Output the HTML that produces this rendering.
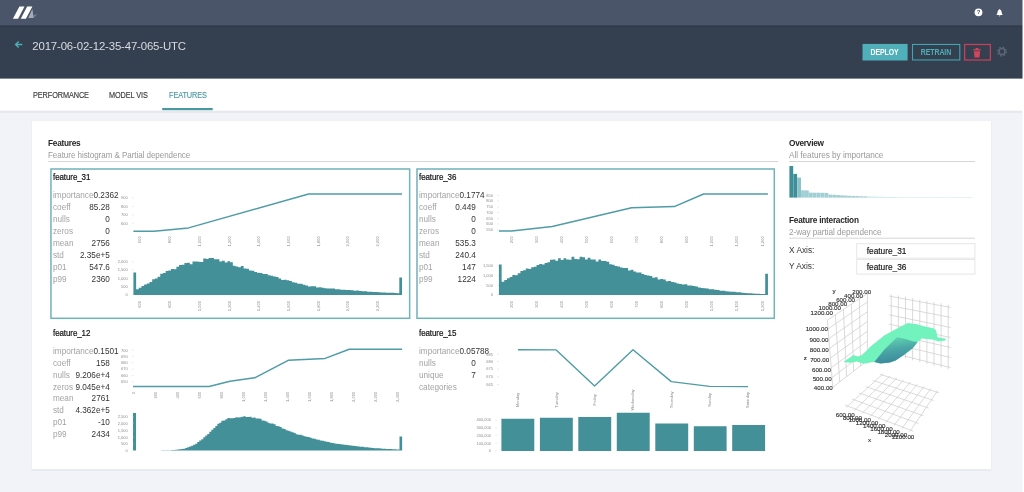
<!DOCTYPE html>
<html lang="en"><head><meta charset="utf-8"><title>Features</title>
<style>
*{box-sizing:border-box;margin:0;padding:0}
html,body{width:1024px;height:492px;overflow:hidden;background:#fff}
body{font-family:"Liberation Sans",sans-serif;position:relative;color:#222}
#app{position:absolute;left:0;top:0;width:1022.5px;height:492px;filter:blur(.6px)}
.abs{position:absolute}
#title{position:absolute;left:32.3px;top:39.1px;font-size:11.4px;line-height:14px;color:#d9dce1;letter-spacing:-.15px;white-space:nowrap}
.tab{position:absolute;top:90px;font-size:8.5px;line-height:11px;color:#3a3a3a;-webkit-text-stroke:.15px #3a3a3a;white-space:nowrap;transform-origin:0 50%;transform:scaleX(.86);letter-spacing:-.1px}
.tab.on{color:#4a98a2;-webkit-text-stroke:.15px #4a98a2}
.h1{position:absolute;font-size:8.6px;line-height:11px;color:#262626;font-weight:bold;white-space:nowrap;letter-spacing:-.25px;transform-origin:0 50%;transform:scaleX(.96)}
.h2{position:absolute;font-size:8.4px;line-height:11px;color:#9a9a9a;white-space:nowrap;letter-spacing:-.05px;transform-origin:0 50%;transform:scaleX(.958)}
.ft{position:absolute;font-size:8.6px;line-height:12px;color:#111;white-space:nowrap;letter-spacing:-.1px;-webkit-text-stroke:.2px #111;transform-origin:0 50%;transform:scaleX(.93)}
.st{position:absolute;display:flex;justify-content:space-between;font-size:9.1px;line-height:12px;white-space:nowrap;transform-origin:0 50%;transform:scaleX(.9)}
.st .k{color:#a3a3a3}
.st .v{color:#333}
.btn{position:absolute;top:44px;height:17px;font-size:8.7px;line-height:17.2px;text-align:center;font-weight:bold;letter-spacing:-.1px}
.btn span{display:inline-block;transform:scaleX(.8)}
.lab{position:absolute;font-size:8.3px;line-height:12px;color:#333;white-space:nowrap}
.inp{position:absolute;left:856.2px;width:118.8px;height:14.8px;font-size:8.3px;line-height:16px;padding-left:10.6px;color:#111;-webkit-text-stroke:.15px #111}
svg text{font-family:"Liberation Sans",sans-serif}
</style></head><body>
<div id="app">
<svg class="abs" style="left:-8px;top:-8px" width="1040" height="508" viewBox="-8 -8 1040 508">
<rect x="-8" y="-8" width="1040" height="508" fill="#f1f3f8"/>
<rect x="-8" y="100" width="1040" height="12.9" fill="#e7e8ec"/>
<rect x="-8" y="70" width="1040" height="40.7" fill="#fff"/>
<rect x="-8" y="20" width="1040" height="58.6" fill="#343f4f"/>
<rect x="-8" y="24" width="1040" height="2.8" fill="#2f394a"/>
<rect x="-8" y="-8" width="1040" height="33.4" fill="#4b556a"/>
<rect x="1022.5" y="-8" width="20" height="508" fill="#fff"/>
<rect x="162.2" y="108" width="50.5" height="2.2" fill="#4a98a2"/>
<rect x="31.5" y="120.7" width="959.9" height="350.1" rx="1" fill="#e7e9ed"/>
<rect x="31.9" y="121" width="959.1" height="348.1" fill="#fff"/>
<rect x="48.3" y="161" width="729.7" height="1" fill="#d6d6d6"/>
<rect x="789" y="161" width="186" height="1" fill="#d6d6d6"/>
<rect x="789" y="237.7" width="186" height="1" fill="#d6d6d6"/>
<rect x="856.7" y="243.7" width="118.2" height="14.5" fill="#fff" stroke="#e6e6e6" stroke-width="1"/>
<rect x="856.7" y="259.4" width="118.2" height="14.7" fill="#fff" stroke="#e6e6e6" stroke-width="1"/>
</svg>
<div id="title">2017-06-02-12-35-47-065-UTC</div>
<svg class="abs" style="left:0;top:0" width="1024" height="100" viewBox="0 0 1024 100">
<rect x="862.5" y="43.9" width="45.1" height="16.6" fill="#4fb0b9"/>
<rect x="912.5" y="44.45" width="47.3" height="15.5" fill="none" stroke="#41a4ae" stroke-width="1.1"/>
<rect x="964.6" y="44.5" width="25.8" height="15.5" fill="none" stroke="#c4405a" stroke-width="1.3"/>
</svg>
<div class="btn" style="left:862.5px;width:45.1px;color:#fff"><span>DEPLOY</span></div>
<div class="btn" style="left:912px;width:48.3px;color:#4fb0b9"><span>RETRAIN</span></div>
<div class="tab" style="left:33.3px">PERFORMANCE</div>
<div class="tab" style="left:108.7px">MODEL VIS</div>
<div class="tab on" style="left:168.7px">FEATURES</div>
<div class="h1" style="left:48.3px;top:137.8px">Features</div>
<div class="h2" style="left:48.3px;top:150px">Feature histogram &amp; Partial dependence</div>
<div class="h1" style="left:789px;top:138.3px">Overview</div>
<div class="h2" style="left:789px;top:149.9px;transform:scaleX(.988)">All features by importance</div>
<div class="h1" style="left:789px;top:215.2px">Feature interaction</div>
<div class="h2" style="left:789px;top:226.8px;transform:scaleX(.977)">2-way partial dependence</div>
<div class="lab" style="left:789px;top:244.1px">X Axis:</div>
<div class="lab" style="left:789px;top:259.9px">Y Axis:</div>
<div class="inp" style="top:243.4px">feature_31</div>
<div class="inp" style="top:258.8px">feature_36</div>
<div class="ft" style="left:53.3px;top:171px">feature_31</div>
<div class="st" style="left:53.3px;top:188.9px;width:63.1px"><span class="k">importance</span><span class="v">0.2362</span></div><div class="st" style="left:53.3px;top:200.8px;width:63.1px"><span class="k">coeff</span><span class="v">85.28</span></div><div class="st" style="left:53.3px;top:212.8px;width:63.1px"><span class="k">nulls</span><span class="v">0</span></div><div class="st" style="left:53.3px;top:224.8px;width:63.1px"><span class="k">zeros</span><span class="v">0</span></div><div class="st" style="left:53.3px;top:236.7px;width:63.1px"><span class="k">mean</span><span class="v">2756</span></div><div class="st" style="left:53.3px;top:248.7px;width:63.1px"><span class="k">std</span><span class="v">2.35e+5</span></div><div class="st" style="left:53.3px;top:260.6px;width:63.1px"><span class="k">p01</span><span class="v">547.6</span></div><div class="st" style="left:53.3px;top:272.6px;width:63.1px"><span class="k">p99</span><span class="v">2360</span></div>
<div class="ft" style="left:419px;top:171px">feature_36</div>
<div class="st" style="left:419.0px;top:188.9px;width:63.1px"><span class="k">importance</span><span class="v">0.1774</span></div><div class="st" style="left:419.0px;top:200.8px;width:63.1px"><span class="k">coeff</span><span class="v">0.449</span></div><div class="st" style="left:419.0px;top:212.8px;width:63.1px"><span class="k">nulls</span><span class="v">0</span></div><div class="st" style="left:419.0px;top:224.8px;width:63.1px"><span class="k">zeros</span><span class="v">0</span></div><div class="st" style="left:419.0px;top:236.7px;width:63.1px"><span class="k">mean</span><span class="v">535.3</span></div><div class="st" style="left:419.0px;top:248.7px;width:63.1px"><span class="k">std</span><span class="v">240.4</span></div><div class="st" style="left:419.0px;top:260.6px;width:63.1px"><span class="k">p01</span><span class="v">147</span></div><div class="st" style="left:419.0px;top:272.6px;width:63.1px"><span class="k">p99</span><span class="v">1224</span></div>
<div class="ft" style="left:53.1px;top:326.8px">feature_12</div>
<div class="st" style="left:53.3px;top:344.6px;width:63.1px"><span class="k">importance</span><span class="v">0.1501</span></div><div class="st" style="left:53.3px;top:356.6px;width:63.1px"><span class="k">coeff</span><span class="v">158</span></div><div class="st" style="left:53.3px;top:368.5px;width:63.1px"><span class="k">nulls</span><span class="v">9.206e+4</span></div><div class="st" style="left:53.3px;top:380.5px;width:63.1px"><span class="k">zeros</span><span class="v">9.045e+4</span></div><div class="st" style="left:53.3px;top:392.4px;width:63.1px"><span class="k">mean</span><span class="v">2761</span></div><div class="st" style="left:53.3px;top:404.4px;width:63.1px"><span class="k">std</span><span class="v">4.362e+5</span></div><div class="st" style="left:53.3px;top:416.3px;width:63.1px"><span class="k">p01</span><span class="v">-10</span></div><div class="st" style="left:53.3px;top:428.2px;width:63.1px"><span class="k">p99</span><span class="v">2434</span></div>
<div class="ft" style="left:418.6px;top:326.8px">feature_15</div>
<div class="st" style="left:419.0px;top:344.6px;width:63.1px"><span class="k">importance</span><span class="v">0.05788</span></div><div class="st" style="left:419.0px;top:356.6px;width:63.1px"><span class="k">nulls</span><span class="v">0</span></div><div class="st" style="left:419.0px;top:368.5px;width:63.1px"><span class="k">unique</span><span class="v">7</span></div><div class="st" style="left:419.0px;top:380.5px;width:63.1px"><span class="k">categories</span><span class="v"></span></div>
<svg class="abs" style="left:0;top:0" width="1024" height="492" viewBox="0 0 1024 492">
<!-- logo -->
<path d="M12.9 18.8L19.4 6.5L24.5 6.5L18.1 18.8Z M20.7 18.8L27.2 6.5L32.4 6.5L25.9 18.8Z" fill="#fff"/>
<path d="M28.3 17.9L32.4 9L33.6 17.9Z" fill="#a5adba"/>
<path d="M33.6 17.9L33.2 15.6L37.1 14.1Z" fill="#7d8797"/>
<!-- back arrow -->
<path d="M22.3 44.5H15.6M18.7 41.5L15.6 44.5L18.7 47.5" fill="none" stroke="#4fb0b9" stroke-width="1.35"/>
<!-- help -->
<circle cx="978.5" cy="12.3" r="3.9" fill="#fff"/>
<text x="978.6" y="14.4" font-size="6" font-weight="bold" text-anchor="middle" fill="#4b556a">?</text>
<!-- bell -->
<path d="M996.4 15 C997.6 14 997.3 11.2 998.3 10.2 C998.9 9.5 999.3 9.3 999.6 9 C999.9 9.3 1000.3 9.5 1000.9 10.2 C1001.9 11.2 1001.6 14 1002.8 15Z M998.8 15.6 H1000.4 A0.8 0.8 0 0 1 998.8 15.6Z" fill="#fff"/>
<!-- trash -->
<path d="M973.2 49.3H980.8V50.6H973.2Z M975.6 48.1H978.4V49.3H975.6Z M973.9 51.2H980.1L979.5 57.6H974.5Z" fill="#d4455c"/>
<!-- gear -->
<circle cx="1002" cy="51.6" r="4.3" fill="none" stroke="#5b6678" stroke-width="1.5" stroke-dasharray="1.7 1.68"/>
<circle cx="1002" cy="51.6" r="3" fill="none" stroke="#5b6678" stroke-width="1.5"/>
<rect x="50.95" y="169" width="358.7" height="149.3" fill="none" stroke="#6fb3bb" stroke-width="1.5"/>
<polyline points="133.4,231.2 154.0,231.2 188.6,227.9 308.6,194.0 402.0,194.0" fill="none" stroke="#4f9ca6" stroke-width="1.5" stroke-linejoin="round"/>
<text x="127.7" y="199.1" text-anchor="end" font-size="4.0" fill="#8c8c8c">900</text><line x1="131.7" x2="133.7" y1="197.7" y2="197.7" stroke="#d8d8d8" stroke-width="0.5"/><text x="127.7" y="207.9" text-anchor="end" font-size="4.0" fill="#8c8c8c">800</text><line x1="131.7" x2="133.7" y1="206.5" y2="206.5" stroke="#d8d8d8" stroke-width="0.5"/><text x="127.7" y="216.4" text-anchor="end" font-size="4.0" fill="#8c8c8c">700</text><line x1="131.7" x2="133.7" y1="215.0" y2="215.0" stroke="#d8d8d8" stroke-width="0.5"/><text x="127.7" y="224.7" text-anchor="end" font-size="4.0" fill="#8c8c8c">600</text><line x1="131.7" x2="133.7" y1="223.3" y2="223.3" stroke="#d8d8d8" stroke-width="0.5"/>
<text transform="translate(141.4 236.3) rotate(-90)" text-anchor="end" font-size="4.1" fill="#8c8c8c">600</text><text transform="translate(171.1 236.3) rotate(-90)" text-anchor="end" font-size="4.1" fill="#8c8c8c">800</text><text transform="translate(200.8 236.3) rotate(-90)" text-anchor="end" font-size="4.1" fill="#8c8c8c">1,000</text><text transform="translate(230.5 236.3) rotate(-90)" text-anchor="end" font-size="4.1" fill="#8c8c8c">1,200</text><text transform="translate(260.2 236.3) rotate(-90)" text-anchor="end" font-size="4.1" fill="#8c8c8c">1,400</text><text transform="translate(289.9 236.3) rotate(-90)" text-anchor="end" font-size="4.1" fill="#8c8c8c">1,600</text><text transform="translate(319.6 236.3) rotate(-90)" text-anchor="end" font-size="4.1" fill="#8c8c8c">1,800</text><text transform="translate(349.3 236.3) rotate(-90)" text-anchor="end" font-size="4.1" fill="#8c8c8c">2,000</text><text transform="translate(379.0 236.3) rotate(-90)" text-anchor="end" font-size="4.1" fill="#8c8c8c">2,200</text>
<text transform="translate(141.4 301.0) rotate(-90)" text-anchor="end" font-size="4.1" fill="#8c8c8c">600</text><text transform="translate(171.1 301.0) rotate(-90)" text-anchor="end" font-size="4.1" fill="#8c8c8c">800</text><text transform="translate(200.8 301.0) rotate(-90)" text-anchor="end" font-size="4.1" fill="#8c8c8c">1,000</text><text transform="translate(230.5 301.0) rotate(-90)" text-anchor="end" font-size="4.1" fill="#8c8c8c">1,200</text><text transform="translate(260.2 301.0) rotate(-90)" text-anchor="end" font-size="4.1" fill="#8c8c8c">1,400</text><text transform="translate(289.9 301.0) rotate(-90)" text-anchor="end" font-size="4.1" fill="#8c8c8c">1,600</text><text transform="translate(319.6 301.0) rotate(-90)" text-anchor="end" font-size="4.1" fill="#8c8c8c">1,800</text><text transform="translate(349.3 301.0) rotate(-90)" text-anchor="end" font-size="4.1" fill="#8c8c8c">2,000</text><text transform="translate(379.0 301.0) rotate(-90)" text-anchor="end" font-size="4.1" fill="#8c8c8c">2,200</text>
<path d="M133.40 295.00V272.60H136.14V295.00ZM136.09 295.00V289.23H138.82V295.00ZM138.77 295.00V287.80H141.51V295.00ZM141.46 295.00V286.06H144.19V295.00ZM144.14 295.00V284.47H146.88V295.00ZM146.83 295.00V283.57H149.57V295.00ZM149.52 295.00V282.12H152.25V295.00ZM152.20 295.00V279.24H154.94V295.00ZM154.89 295.00V278.46H157.62V295.00ZM157.57 295.00V276.85H160.31V295.00ZM160.26 295.00V273.64H163.00V295.00ZM162.95 295.00V273.02H165.68V295.00ZM165.63 295.00V270.88H168.37V295.00ZM168.32 295.00V270.58H171.05V295.00ZM171.00 295.00V269.02H173.74V295.00ZM173.69 295.00V269.17H176.43V295.00ZM176.38 295.00V266.72H179.11V295.00ZM179.06 295.00V264.88H181.80V295.00ZM181.75 295.00V264.74H184.48V295.00ZM184.43 295.00V263.09H187.17V295.00ZM187.12 295.00V262.76H189.86V295.00ZM189.81 295.00V264.18H192.54V295.00ZM192.49 295.00V261.39H195.23V295.00ZM195.18 295.00V261.39H197.91V295.00ZM197.86 295.00V261.83H200.60V295.00ZM200.55 295.00V262.09H203.29V295.00ZM203.24 295.00V258.44H205.97V295.00ZM205.92 295.00V259.08H208.66V295.00ZM208.61 295.00V257.94H211.34V295.00ZM211.29 295.00V258.06H214.03V295.00ZM213.98 295.00V259.32H216.72V295.00ZM216.67 295.00V259.15H219.40V295.00ZM219.35 295.00V261.49H222.09V295.00ZM222.04 295.00V260.67H224.77V295.00ZM224.72 295.00V262.39H227.46V295.00ZM227.41 295.00V261.35H230.15V295.00ZM230.10 295.00V262.31H232.83V295.00ZM232.78 295.00V265.67H235.52V295.00ZM235.47 295.00V266.46H238.20V295.00ZM238.15 295.00V267.14H240.89V295.00ZM240.84 295.00V265.97H243.58V295.00ZM243.53 295.00V268.38H246.26V295.00ZM246.21 295.00V268.82H248.95V295.00ZM248.90 295.00V270.57H251.63V295.00ZM251.58 295.00V270.86H254.32V295.00ZM254.27 295.00V271.95H257.01V295.00ZM256.96 295.00V272.83H259.69V295.00ZM259.64 295.00V273.11H262.38V295.00ZM262.33 295.00V273.93H265.06V295.00ZM265.01 295.00V274.09H267.75V295.00ZM267.70 295.00V275.36H270.44V295.00ZM270.39 295.00V275.68H273.12V295.00ZM273.07 295.00V276.58H275.81V295.00ZM275.76 295.00V277.12H278.49V295.00ZM278.44 295.00V278.41H281.18V295.00ZM281.13 295.00V279.95H283.87V295.00ZM283.82 295.00V279.63H286.55V295.00ZM286.50 295.00V280.25H289.24V295.00ZM289.19 295.00V281.08H291.92V295.00ZM291.87 295.00V282.17H294.61V295.00ZM294.56 295.00V282.63H297.30V295.00ZM297.25 295.00V283.85H299.98V295.00ZM299.93 295.00V283.79H302.67V295.00ZM302.62 295.00V284.71H305.35V295.00ZM305.30 295.00V285.62H308.04V295.00ZM307.99 295.00V286.43H310.73V295.00ZM310.68 295.00V286.13H313.41V295.00ZM313.36 295.00V286.34H316.10V295.00ZM316.05 295.00V287.38H318.78V295.00ZM318.73 295.00V287.13H321.47V295.00ZM321.42 295.00V287.73H324.16V295.00ZM324.11 295.00V288.22H326.84V295.00ZM326.79 295.00V288.42H329.53V295.00ZM329.48 295.00V288.40H332.21V295.00ZM332.16 295.00V288.59H334.90V295.00ZM334.85 295.00V289.33H337.59V295.00ZM337.54 295.00V289.23H340.27V295.00ZM340.22 295.00V289.79H342.96V295.00ZM342.91 295.00V289.67H345.64V295.00ZM345.59 295.00V290.11H348.33V295.00ZM348.28 295.00V290.09H351.02V295.00ZM350.97 295.00V290.24H353.70V295.00ZM353.65 295.00V290.63H356.39V295.00ZM356.34 295.00V290.60H359.07V295.00ZM359.02 295.00V291.07H361.76V295.00ZM361.71 295.00V291.33H364.45V295.00ZM364.40 295.00V291.31H367.13V295.00ZM367.08 295.00V291.69H369.82V295.00ZM369.77 295.00V291.81H372.50V295.00ZM372.45 295.00V291.92H375.19V295.00ZM375.14 295.00V292.03H377.88V295.00ZM377.83 295.00V292.31H380.56V295.00ZM380.51 295.00V292.47H383.25V295.00ZM383.20 295.00V292.40H385.93V295.00ZM385.88 295.00V292.68H388.62V295.00ZM388.57 295.00V292.67H391.31V295.00ZM391.26 295.00V292.83H393.99V295.00ZM393.94 295.00V293.08H396.68V295.00ZM396.63 295.00V293.20H399.36V295.00ZM399.31 295.00V277.40H402.05V295.00Z" fill="#439099"/>
<text x="127.7" y="263.1" text-anchor="end" font-size="4.0" fill="#8c8c8c">2,000</text><line x1="131.7" x2="133.7" y1="261.7" y2="261.7" stroke="#d8d8d8" stroke-width="0.5"/><text x="127.7" y="271.4" text-anchor="end" font-size="4.0" fill="#8c8c8c">1,500</text><line x1="131.7" x2="133.7" y1="270.0" y2="270.0" stroke="#d8d8d8" stroke-width="0.5"/><text x="127.7" y="279.7" text-anchor="end" font-size="4.0" fill="#8c8c8c">1,000</text><line x1="131.7" x2="133.7" y1="278.3" y2="278.3" stroke="#d8d8d8" stroke-width="0.5"/><text x="127.7" y="287.9" text-anchor="end" font-size="4.0" fill="#8c8c8c">500</text><line x1="131.7" x2="133.7" y1="286.5" y2="286.5" stroke="#d8d8d8" stroke-width="0.5"/><text x="127.7" y="296.2" text-anchor="end" font-size="4.0" fill="#8c8c8c">0</text><line x1="131.7" x2="133.7" y1="294.8" y2="294.8" stroke="#d8d8d8" stroke-width="0.5"/>
<rect x="417" y="169" width="357.3" height="149.3" fill="none" stroke="#6fb3bb" stroke-width="1.5"/>
<polyline points="498.9,231.1 511.7,231.1 552.3,226.5 631.6,207.8 674.3,206.6 703.6,194.0 767.9,194.0" fill="none" stroke="#4f9ca6" stroke-width="1.5" stroke-linejoin="round"/>
<text x="493.0" y="196.7" text-anchor="end" font-size="4.0" fill="#8c8c8c">850</text><line x1="497.0" x2="499.0" y1="195.3" y2="195.3" stroke="#d8d8d8" stroke-width="0.5"/><text x="493.0" y="202.4" text-anchor="end" font-size="4.0" fill="#8c8c8c">800</text><line x1="497.0" x2="499.0" y1="201.0" y2="201.0" stroke="#d8d8d8" stroke-width="0.5"/><text x="493.0" y="208.1" text-anchor="end" font-size="4.0" fill="#8c8c8c">750</text><line x1="497.0" x2="499.0" y1="206.7" y2="206.7" stroke="#d8d8d8" stroke-width="0.5"/><text x="493.0" y="214.0" text-anchor="end" font-size="4.0" fill="#8c8c8c">700</text><line x1="497.0" x2="499.0" y1="212.6" y2="212.6" stroke="#d8d8d8" stroke-width="0.5"/><text x="493.0" y="219.8" text-anchor="end" font-size="4.0" fill="#8c8c8c">650</text><line x1="497.0" x2="499.0" y1="218.4" y2="218.4" stroke="#d8d8d8" stroke-width="0.5"/><text x="493.0" y="225.4" text-anchor="end" font-size="4.0" fill="#8c8c8c">600</text><line x1="497.0" x2="499.0" y1="224.0" y2="224.0" stroke="#d8d8d8" stroke-width="0.5"/><text x="493.0" y="231.2" text-anchor="end" font-size="4.0" fill="#8c8c8c">550</text><line x1="497.0" x2="499.0" y1="229.8" y2="229.8" stroke="#d8d8d8" stroke-width="0.5"/>
<text transform="translate(512.5 236.3) rotate(-90)" text-anchor="end" font-size="4.1" fill="#8c8c8c">200</text><text transform="translate(537.6 236.3) rotate(-90)" text-anchor="end" font-size="4.1" fill="#8c8c8c">300</text><text transform="translate(562.7 236.3) rotate(-90)" text-anchor="end" font-size="4.1" fill="#8c8c8c">400</text><text transform="translate(587.8 236.3) rotate(-90)" text-anchor="end" font-size="4.1" fill="#8c8c8c">500</text><text transform="translate(612.9 236.3) rotate(-90)" text-anchor="end" font-size="4.1" fill="#8c8c8c">600</text><text transform="translate(638.0 236.3) rotate(-90)" text-anchor="end" font-size="4.1" fill="#8c8c8c">700</text><text transform="translate(663.1 236.3) rotate(-90)" text-anchor="end" font-size="4.1" fill="#8c8c8c">800</text><text transform="translate(688.2 236.3) rotate(-90)" text-anchor="end" font-size="4.1" fill="#8c8c8c">900</text><text transform="translate(713.3 236.3) rotate(-90)" text-anchor="end" font-size="4.1" fill="#8c8c8c">1,000</text><text transform="translate(738.4 236.3) rotate(-90)" text-anchor="end" font-size="4.1" fill="#8c8c8c">1,100</text><text transform="translate(763.5 236.3) rotate(-90)" text-anchor="end" font-size="4.1" fill="#8c8c8c">1,200</text>
<text transform="translate(512.5 301.0) rotate(-90)" text-anchor="end" font-size="4.1" fill="#8c8c8c">200</text><text transform="translate(537.6 301.0) rotate(-90)" text-anchor="end" font-size="4.1" fill="#8c8c8c">300</text><text transform="translate(562.7 301.0) rotate(-90)" text-anchor="end" font-size="4.1" fill="#8c8c8c">400</text><text transform="translate(587.8 301.0) rotate(-90)" text-anchor="end" font-size="4.1" fill="#8c8c8c">500</text><text transform="translate(612.9 301.0) rotate(-90)" text-anchor="end" font-size="4.1" fill="#8c8c8c">600</text><text transform="translate(638.0 301.0) rotate(-90)" text-anchor="end" font-size="4.1" fill="#8c8c8c">700</text><text transform="translate(663.1 301.0) rotate(-90)" text-anchor="end" font-size="4.1" fill="#8c8c8c">800</text><text transform="translate(688.2 301.0) rotate(-90)" text-anchor="end" font-size="4.1" fill="#8c8c8c">900</text><text transform="translate(713.3 301.0) rotate(-90)" text-anchor="end" font-size="4.1" fill="#8c8c8c">1,000</text><text transform="translate(738.4 301.0) rotate(-90)" text-anchor="end" font-size="4.1" fill="#8c8c8c">1,100</text><text transform="translate(763.5 301.0) rotate(-90)" text-anchor="end" font-size="4.1" fill="#8c8c8c">1,200</text>
<path d="M498.90 295.00V264.60H501.64V295.00ZM501.59 295.00V281.73H504.33V295.00ZM504.28 295.00V280.08H507.02V295.00ZM506.97 295.00V278.26H509.71V295.00ZM509.66 295.00V276.95H512.40V295.00ZM512.35 295.00V275.03H515.09V295.00ZM515.04 295.00V275.23H517.78V295.00ZM517.73 295.00V273.17H520.47V295.00ZM520.42 295.00V270.92H523.16V295.00ZM523.11 295.00V270.26H525.85V295.00ZM525.80 295.00V268.41H528.54V295.00ZM528.49 295.00V269.01H531.23V295.00ZM531.18 295.00V267.15H533.92V295.00ZM533.87 295.00V266.75H536.61V295.00ZM536.56 295.00V264.98H539.30V295.00ZM539.25 295.00V263.91H541.99V295.00ZM541.94 295.00V264.53H544.68V295.00ZM544.63 295.00V263.11H547.37V295.00ZM547.32 295.00V262.31H550.06V295.00ZM550.01 295.00V259.74H552.75V295.00ZM552.70 295.00V259.56H555.44V295.00ZM555.39 295.00V260.84H558.13V295.00ZM558.08 295.00V258.17H560.82V295.00ZM560.77 295.00V260.00H563.51V295.00ZM563.46 295.00V258.21H566.20V295.00ZM566.15 295.00V259.61H568.89V295.00ZM568.84 295.00V259.80H571.58V295.00ZM571.53 295.00V256.80H574.27V295.00ZM574.22 295.00V259.10H576.96V295.00ZM576.91 295.00V259.18H579.65V295.00ZM579.60 295.00V256.75H582.34V295.00ZM582.29 295.00V257.22H585.03V295.00ZM584.98 295.00V259.41H587.72V295.00ZM587.67 295.00V257.68H590.41V295.00ZM590.36 295.00V259.49H593.10V295.00ZM593.05 295.00V259.51H595.79V295.00ZM595.74 295.00V261.43H598.48V295.00ZM598.43 295.00V259.61H601.17V295.00ZM601.12 295.00V261.04H603.86V295.00ZM603.81 295.00V260.92H606.55V295.00ZM606.50 295.00V261.83H609.24V295.00ZM609.19 295.00V264.20H611.93V295.00ZM611.88 295.00V264.69H614.62V295.00ZM614.57 295.00V265.88H617.31V295.00ZM617.26 295.00V266.59H620.00V295.00ZM619.95 295.00V267.57H622.69V295.00ZM622.64 295.00V267.89H625.38V295.00ZM625.33 295.00V268.09H628.07V295.00ZM628.02 295.00V270.43H630.76V295.00ZM630.71 295.00V269.82H633.45V295.00ZM633.40 295.00V271.51H636.14V295.00ZM636.09 295.00V272.49H638.83V295.00ZM638.78 295.00V272.41H641.52V295.00ZM641.47 295.00V273.88H644.21V295.00ZM644.16 295.00V274.99H646.90V295.00ZM646.85 295.00V275.49H649.59V295.00ZM649.54 295.00V275.92H652.28V295.00ZM652.23 295.00V277.79H654.97V295.00ZM654.92 295.00V277.15H657.66V295.00ZM657.61 295.00V279.39H660.35V295.00ZM660.30 295.00V279.03H663.04V295.00ZM662.99 295.00V279.55H665.73V295.00ZM665.68 295.00V281.26H668.42V295.00ZM668.37 295.00V280.91H671.11V295.00ZM671.06 295.00V282.05H673.80V295.00ZM673.75 295.00V282.43H676.49V295.00ZM676.44 295.00V283.58H679.18V295.00ZM679.13 295.00V284.06H681.87V295.00ZM681.82 295.00V284.45H684.56V295.00ZM684.51 295.00V284.25H687.25V295.00ZM687.20 295.00V285.48H689.94V295.00ZM689.89 295.00V285.53H692.63V295.00ZM692.58 295.00V285.95H695.32V295.00ZM695.27 295.00V286.50H698.01V295.00ZM697.96 295.00V287.47H700.70V295.00ZM700.65 295.00V287.89H703.39V295.00ZM703.34 295.00V288.19H706.08V295.00ZM706.03 295.00V288.45H708.77V295.00ZM708.72 295.00V289.22H711.46V295.00ZM711.41 295.00V289.29H714.15V295.00ZM714.10 295.00V289.68H716.84V295.00ZM716.79 295.00V290.07H719.53V295.00ZM719.48 295.00V290.77H722.22V295.00ZM722.17 295.00V290.69H724.91V295.00ZM724.86 295.00V291.26H727.60V295.00ZM727.55 295.00V291.44H730.29V295.00ZM730.24 295.00V291.63H732.98V295.00ZM732.93 295.00V291.81H735.67V295.00ZM735.62 295.00V292.24H738.36V295.00ZM738.31 295.00V292.37H741.05V295.00ZM741.00 295.00V292.73H743.74V295.00ZM743.69 295.00V293.04H746.43V295.00ZM746.38 295.00V293.19H749.12V295.00ZM749.07 295.00V293.36H751.81V295.00ZM751.76 295.00V293.52H754.50V295.00ZM754.45 295.00V293.66H757.19V295.00ZM757.14 295.00V293.75H759.88V295.00ZM759.83 295.00V293.88H762.57V295.00ZM762.52 295.00V294.11H765.26V295.00ZM765.21 295.00V273.70H767.95V295.00Z" fill="#439099"/>
<text x="493.0" y="267.4" text-anchor="end" font-size="4.0" fill="#8c8c8c">1,500</text><line x1="497.0" x2="499.0" y1="266.0" y2="266.0" stroke="#d8d8d8" stroke-width="0.5"/><text x="493.0" y="277.1" text-anchor="end" font-size="4.0" fill="#8c8c8c">1,000</text><line x1="497.0" x2="499.0" y1="275.7" y2="275.7" stroke="#d8d8d8" stroke-width="0.5"/><text x="493.0" y="286.6" text-anchor="end" font-size="4.0" fill="#8c8c8c">500</text><line x1="497.0" x2="499.0" y1="285.2" y2="285.2" stroke="#d8d8d8" stroke-width="0.5"/><text x="493.0" y="296.4" text-anchor="end" font-size="4.0" fill="#8c8c8c">0</text><line x1="497.0" x2="499.0" y1="295.0" y2="295.0" stroke="#d8d8d8" stroke-width="0.5"/>
<polyline points="133.0,386.5 209.0,386.5 230.0,381.2 254.7,377.8 288.2,360.3 325.2,358.4 349.2,349.2 402.1,349.2" fill="none" stroke="#4f9ca6" stroke-width="1.5" stroke-linejoin="round"/>
<text x="127.7" y="351.6" text-anchor="end" font-size="4.0" fill="#8c8c8c">700</text><line x1="131.7" x2="133.7" y1="350.2" y2="350.2" stroke="#d8d8d8" stroke-width="0.5"/><text x="127.7" y="357.7" text-anchor="end" font-size="4.0" fill="#8c8c8c">690</text><line x1="131.7" x2="133.7" y1="356.3" y2="356.3" stroke="#d8d8d8" stroke-width="0.5"/><text x="127.7" y="364.1" text-anchor="end" font-size="4.0" fill="#8c8c8c">680</text><line x1="131.7" x2="133.7" y1="362.7" y2="362.7" stroke="#d8d8d8" stroke-width="0.5"/><text x="127.7" y="370.4" text-anchor="end" font-size="4.0" fill="#8c8c8c">670</text><line x1="131.7" x2="133.7" y1="369.0" y2="369.0" stroke="#d8d8d8" stroke-width="0.5"/><text x="127.7" y="376.9" text-anchor="end" font-size="4.0" fill="#8c8c8c">660</text><line x1="131.7" x2="133.7" y1="375.5" y2="375.5" stroke="#d8d8d8" stroke-width="0.5"/><text x="127.7" y="383.3" text-anchor="end" font-size="4.0" fill="#8c8c8c">650</text><line x1="131.7" x2="133.7" y1="381.9" y2="381.9" stroke="#d8d8d8" stroke-width="0.5"/>
<text transform="translate(134.5 391.7) rotate(-90)" text-anchor="end" font-size="4.1" fill="#8c8c8c">0</text><text transform="translate(156.5 391.7) rotate(-90)" text-anchor="end" font-size="4.1" fill="#8c8c8c">200</text><text transform="translate(178.6 391.7) rotate(-90)" text-anchor="end" font-size="4.1" fill="#8c8c8c">400</text><text transform="translate(200.6 391.7) rotate(-90)" text-anchor="end" font-size="4.1" fill="#8c8c8c">600</text><text transform="translate(222.6 391.7) rotate(-90)" text-anchor="end" font-size="4.1" fill="#8c8c8c">800</text><text transform="translate(244.7 391.7) rotate(-90)" text-anchor="end" font-size="4.1" fill="#8c8c8c">1,000</text><text transform="translate(266.7 391.7) rotate(-90)" text-anchor="end" font-size="4.1" fill="#8c8c8c">1,200</text><text transform="translate(288.8 391.7) rotate(-90)" text-anchor="end" font-size="4.1" fill="#8c8c8c">1,400</text><text transform="translate(310.8 391.7) rotate(-90)" text-anchor="end" font-size="4.1" fill="#8c8c8c">1,600</text><text transform="translate(332.8 391.7) rotate(-90)" text-anchor="end" font-size="4.1" fill="#8c8c8c">1,800</text><text transform="translate(354.9 391.7) rotate(-90)" text-anchor="end" font-size="4.1" fill="#8c8c8c">2,000</text><text transform="translate(376.9 391.7) rotate(-90)" text-anchor="end" font-size="4.1" fill="#8c8c8c">2,200</text><text transform="translate(399.0 391.7) rotate(-90)" text-anchor="end" font-size="4.1" fill="#8c8c8c">2,400</text>
<path d="M133.00 450.60V413.00H136.05V450.60ZM149.07 450.60V450.44H151.12V450.60ZM151.07 450.60V450.43H153.13V450.60ZM153.08 450.60V450.43H155.14V450.60ZM155.09 450.60V450.42H157.15V450.60ZM157.10 450.60V450.41H159.16V450.60ZM159.11 450.60V450.40H161.16V450.60ZM161.11 450.60V450.34H163.17V450.60ZM163.12 450.60V450.29H165.18V450.60ZM165.13 450.60V450.24H167.19V450.60ZM167.14 450.60V450.19H169.20V450.60ZM169.15 450.60V450.13H171.21V450.60ZM171.16 450.60V450.07H173.21V450.60ZM173.16 450.60V450.02H175.22V450.60ZM175.17 450.60V449.82H177.23V450.60ZM177.18 450.60V449.53H179.24V450.60ZM179.19 450.60V449.21H181.25V450.60ZM181.20 450.60V448.95H183.26V450.60ZM183.21 450.60V448.64H185.26V450.60ZM185.21 450.60V447.99H187.27V450.60ZM187.22 450.60V447.18H189.28V450.60ZM189.23 450.60V446.42H191.29V450.60ZM191.24 450.60V445.69H193.30V450.60ZM193.25 450.60V444.85H195.30V450.60ZM195.25 450.60V443.64H197.31V450.60ZM197.26 450.60V442.12H199.32V450.60ZM199.27 450.60V440.42H201.33V450.60ZM201.28 450.60V439.18H203.34V450.60ZM203.29 450.60V437.33H205.35V450.60ZM205.30 450.60V435.47H207.35V450.60ZM207.30 450.60V433.99H209.36V450.60ZM209.31 450.60V431.78H211.37V450.60ZM211.32 450.60V429.68H213.38V450.60ZM213.33 450.60V428.10H215.39V450.60ZM215.34 450.60V425.93H217.39V450.60ZM217.34 450.60V423.70H219.40V450.60ZM219.35 450.60V422.85H221.41V450.60ZM221.36 450.60V420.75H223.42V450.60ZM223.37 450.60V420.57H225.43V450.60ZM225.38 450.60V419.26H227.44V450.60ZM227.39 450.60V418.10H229.44V450.60ZM229.39 450.60V418.34H231.45V450.60ZM231.40 450.60V418.34H233.46V450.60ZM233.41 450.60V417.99H235.47V450.60ZM235.42 450.60V417.13H237.48V450.60ZM237.43 450.60V417.58H239.49V450.60ZM239.44 450.60V417.23H241.49V450.60ZM241.44 450.60V416.66H243.50V450.60ZM243.45 450.60V416.16H245.51V450.60ZM245.46 450.60V416.91H247.52V450.60ZM247.47 450.60V417.01H249.53V450.60ZM249.48 450.60V416.76H251.53V450.60ZM251.48 450.60V417.67H253.54V450.60ZM253.49 450.60V417.52H255.55V450.60ZM255.50 450.60V418.55H257.56V450.60ZM257.51 450.60V418.49H259.57V450.60ZM259.52 450.60V418.63H261.58V450.60ZM261.53 450.60V420.56H263.58V450.60ZM263.53 450.60V420.75H265.59V450.60ZM265.54 450.60V421.50H267.60V450.60ZM267.55 450.60V422.82H269.61V450.60ZM269.56 450.60V423.48H271.62V450.60ZM271.57 450.60V423.50H273.62V450.60ZM273.57 450.60V424.32H275.63V450.60ZM275.58 450.60V426.04H277.64V450.60ZM277.59 450.60V426.31H279.65V450.60ZM279.60 450.60V426.93H281.66V450.60ZM281.61 450.60V428.43H283.67V450.60ZM283.62 450.60V428.94H285.67V450.60ZM285.62 450.60V430.25H287.68V450.60ZM287.63 450.60V430.82H289.69V450.60ZM289.64 450.60V431.42H291.70V450.60ZM291.65 450.60V432.33H293.71V450.60ZM293.66 450.60V433.05H295.71V450.60ZM295.66 450.60V434.26H297.72V450.60ZM297.67 450.60V434.63H299.73V450.60ZM299.68 450.60V434.86H301.74V450.60ZM301.69 450.60V435.58H303.75V450.60ZM303.70 450.60V436.21H305.76V450.60ZM305.71 450.60V436.79H307.76V450.60ZM307.71 450.60V437.02H309.77V450.60ZM309.72 450.60V437.79H311.78V450.60ZM311.73 450.60V438.62H313.79V450.60ZM313.74 450.60V438.79H315.80V450.60ZM315.75 450.60V439.47H317.81V450.60ZM317.76 450.60V439.87H319.81V450.60ZM319.76 450.60V440.42H321.82V450.60ZM321.77 450.60V440.77H323.83V450.60ZM323.78 450.60V441.27H325.84V450.60ZM325.79 450.60V441.80H327.85V450.60ZM327.80 450.60V442.06H329.85V450.60ZM329.80 450.60V442.68H331.86V450.60ZM331.81 450.60V442.92H333.87V450.60ZM333.82 450.60V443.60H335.88V450.60ZM335.83 450.60V443.65H337.89V450.60ZM337.84 450.60V443.90H339.90V450.60ZM339.85 450.60V444.23H341.90V450.60ZM341.85 450.60V444.43H343.91V450.60ZM343.86 450.60V444.79H345.92V450.60ZM345.87 450.60V444.93H347.93V450.60ZM347.88 450.60V445.25H349.94V450.60ZM349.89 450.60V445.54H351.94V450.60ZM351.89 450.60V445.65H353.95V450.60ZM353.90 450.60V446.01H355.96V450.60ZM355.91 450.60V446.24H357.97V450.60ZM357.92 450.60V446.38H359.98V450.60ZM359.93 450.60V446.68H361.99V450.60ZM361.94 450.60V446.86H363.99V450.60ZM363.94 450.60V447.15H366.00V450.60ZM365.95 450.60V447.28H368.01V450.60ZM367.96 450.60V447.58H370.02V450.60ZM369.97 450.60V447.83H372.03V450.60ZM371.98 450.60V447.95H374.04V450.60ZM373.99 450.60V448.15H376.04V450.60ZM375.99 450.60V448.20H378.05V450.60ZM378.00 450.60V448.33H380.06V450.60ZM380.01 450.60V448.48H382.07V450.60ZM382.02 450.60V448.66H384.08V450.60ZM384.03 450.60V448.77H386.08V450.60ZM386.03 450.60V448.88H388.09V450.60ZM388.04 450.60V448.99H390.10V450.60ZM390.05 450.60V449.10H392.11V450.60ZM392.06 450.60V449.21H394.12V450.60ZM394.07 450.60V449.37H396.13V450.60ZM396.08 450.60V449.50H398.13V450.60ZM398.08 450.60V449.60H400.14V450.60ZM399.50 450.60V436.40H402.15V450.60Z" fill="#439099"/>
<text x="127.7" y="418.4" text-anchor="end" font-size="4.0" fill="#8c8c8c">2,500</text><line x1="131.7" x2="133.7" y1="417.0" y2="417.0" stroke="#d8d8d8" stroke-width="0.5"/><text x="127.7" y="425.1" text-anchor="end" font-size="4.0" fill="#8c8c8c">2,000</text><line x1="131.7" x2="133.7" y1="423.7" y2="423.7" stroke="#d8d8d8" stroke-width="0.5"/><text x="127.7" y="431.8" text-anchor="end" font-size="4.0" fill="#8c8c8c">1,500</text><line x1="131.7" x2="133.7" y1="430.4" y2="430.4" stroke="#d8d8d8" stroke-width="0.5"/><text x="127.7" y="438.5" text-anchor="end" font-size="4.0" fill="#8c8c8c">1,000</text><line x1="131.7" x2="133.7" y1="437.1" y2="437.1" stroke="#d8d8d8" stroke-width="0.5"/><text x="127.7" y="445.2" text-anchor="end" font-size="4.0" fill="#8c8c8c">500</text><line x1="131.7" x2="133.7" y1="443.8" y2="443.8" stroke="#d8d8d8" stroke-width="0.5"/><text x="127.7" y="451.9" text-anchor="end" font-size="4.0" fill="#8c8c8c">0</text><line x1="131.7" x2="133.7" y1="450.5" y2="450.5" stroke="#d8d8d8" stroke-width="0.5"/>
<polyline points="517.9,349.7 556.2,349.9 594.6,385.9 633.0,349.7 671.3,381.6 709.6,386.4 748.0,386.6" fill="none" stroke="#4f9ca6" stroke-width="1.4" stroke-linejoin="round"/>
<text x="493.0" y="355.5" text-anchor="end" font-size="4.0" fill="#8c8c8c">685</text><line x1="497.0" x2="499.0" y1="354.1" y2="354.1" stroke="#d8d8d8" stroke-width="0.5"/><text x="493.0" y="362.9" text-anchor="end" font-size="4.0" fill="#8c8c8c">680</text><line x1="497.0" x2="499.0" y1="361.5" y2="361.5" stroke="#d8d8d8" stroke-width="0.5"/><text x="493.0" y="370.4" text-anchor="end" font-size="4.0" fill="#8c8c8c">675</text><line x1="497.0" x2="499.0" y1="369.0" y2="369.0" stroke="#d8d8d8" stroke-width="0.5"/><text x="493.0" y="378.1" text-anchor="end" font-size="4.0" fill="#8c8c8c">670</text><line x1="497.0" x2="499.0" y1="376.7" y2="376.7" stroke="#d8d8d8" stroke-width="0.5"/><text x="493.0" y="386.0" text-anchor="end" font-size="4.0" fill="#8c8c8c">665</text><line x1="497.0" x2="499.0" y1="384.6" y2="384.6" stroke="#d8d8d8" stroke-width="0.5"/>
<text transform="translate(519.3 399.9) rotate(-90)" text-anchor="middle" font-size="4.0" fill="#8c8c8c">Monday</text><text transform="translate(557.7 399.9) rotate(-90)" text-anchor="middle" font-size="4.0" fill="#8c8c8c">Tuesday</text><text transform="translate(596.0 399.9) rotate(-90)" text-anchor="middle" font-size="4.0" fill="#8c8c8c">Friday</text><text transform="translate(634.4 399.9) rotate(-90)" text-anchor="middle" font-size="4.0" fill="#8c8c8c">Wednesday</text><text transform="translate(672.7 399.9) rotate(-90)" text-anchor="middle" font-size="4.0" fill="#8c8c8c">Thursday</text><text transform="translate(711.1 399.9) rotate(-90)" text-anchor="middle" font-size="4.0" fill="#8c8c8c">Sunday</text><text transform="translate(749.4 399.9) rotate(-90)" text-anchor="middle" font-size="4.0" fill="#8c8c8c">Saturday</text>
<path d="M501.4 450.9V418.8H534.3V450.9ZM539.9 450.9V417.8H572.8V450.9ZM578.3 450.9V417.0H611.2V450.9ZM616.8 450.9V412.8H649.7V450.9ZM655.3 450.9V423.5H688.2V450.9ZM693.8 450.9V426.2H726.6V450.9ZM732.2 450.9V425.0H765.1V450.9Z" fill="#439099"/>
<text x="491.0" y="421.4" text-anchor="end" font-size="4.0" fill="#8c8c8c">400,000</text><line x1="495.0" x2="497.0" y1="420.0" y2="420.0" stroke="#d8d8d8" stroke-width="0.5"/><text x="491.0" y="429.0" text-anchor="end" font-size="4.0" fill="#8c8c8c">300,000</text><line x1="495.0" x2="497.0" y1="427.6" y2="427.6" stroke="#d8d8d8" stroke-width="0.5"/><text x="491.0" y="436.6" text-anchor="end" font-size="4.0" fill="#8c8c8c">200,000</text><line x1="495.0" x2="497.0" y1="435.2" y2="435.2" stroke="#d8d8d8" stroke-width="0.5"/><text x="491.0" y="444.6" text-anchor="end" font-size="4.0" fill="#8c8c8c">100,000</text><line x1="495.0" x2="497.0" y1="443.2" y2="443.2" stroke="#d8d8d8" stroke-width="0.5"/><text x="491.0" y="452.0" text-anchor="end" font-size="4.0" fill="#8c8c8c">0</text><line x1="495.0" x2="497.0" y1="450.6" y2="450.6" stroke="#d8d8d8" stroke-width="0.5"/>
<rect x="789.40" y="166.00" width="3.8" height="31.60" fill="#3f8f98"/><rect x="793.30" y="173.90" width="3.8" height="23.70" fill="#3f8f98"/><rect x="797.20" y="177.60" width="3.8" height="20.00" fill="#8cc3c8"/><rect x="801.10" y="190.30" width="3.8" height="7.30" fill="#a2cfd3"/><rect x="805.00" y="190.40" width="3.8" height="7.20" fill="#a2cfd3"/><rect x="808.90" y="192.60" width="3.8" height="5.00" fill="#a2cfd3"/><rect x="812.80" y="192.70" width="3.8" height="4.90" fill="#a2cfd3"/><rect x="816.70" y="192.70" width="3.8" height="4.90" fill="#a2cfd3"/><rect x="820.60" y="192.80" width="3.8" height="4.80" fill="#a2cfd3"/><rect x="824.50" y="192.90" width="3.8" height="4.70" fill="#a2cfd3"/><rect x="828.40" y="194.60" width="3.8" height="3.00" fill="#a2cfd3"/><rect x="832.30" y="194.80" width="3.8" height="2.80" fill="#a2cfd3"/><rect x="836.20" y="195.10" width="3.8" height="2.50" fill="#a2cfd3"/><rect x="840.10" y="195.40" width="3.8" height="2.20" fill="#a2cfd3"/><rect x="844.00" y="195.60" width="3.8" height="2.00" fill="#a2cfd3"/><rect x="847.90" y="195.80" width="3.8" height="1.80" fill="#a2cfd3"/><rect x="851.80" y="196.00" width="3.8" height="1.60" fill="#a2cfd3"/><rect x="855.70" y="196.10" width="3.8" height="1.50" fill="#a2cfd3"/><rect x="859.60" y="196.30" width="3.8" height="1.30" fill="#a2cfd3"/><rect x="863.50" y="196.40" width="3.8" height="1.20" fill="#a2cfd3"/><rect x="867.40" y="196.56" width="3.8" height="1.04" fill="#bfdfe2"/><rect x="871.30" y="196.66" width="3.8" height="0.94" fill="#bfdfe2"/><rect x="875.20" y="196.75" width="3.8" height="0.85" fill="#bfdfe2"/><rect x="879.10" y="196.83" width="3.8" height="0.77" fill="#bfdfe2"/><rect x="883.00" y="196.90" width="3.8" height="0.70" fill="#bfdfe2"/><rect x="886.90" y="196.97" width="3.8" height="0.63" fill="#bfdfe2"/><rect x="890.80" y="197.03" width="3.8" height="0.57" fill="#bfdfe2"/><rect x="894.70" y="197.08" width="3.8" height="0.52" fill="#bfdfe2"/><rect x="898.60" y="197.13" width="3.8" height="0.47" fill="#bfdfe2"/><rect x="902.50" y="197.18" width="3.8" height="0.42" fill="#bfdfe2"/><rect x="906.40" y="197.20" width="3.8" height="0.40" fill="#bfdfe2"/><rect x="910.30" y="197.20" width="3.8" height="0.40" fill="#bfdfe2"/><rect x="914.20" y="197.20" width="3.8" height="0.40" fill="#bfdfe2"/><rect x="918.10" y="197.20" width="3.8" height="0.40" fill="#bfdfe2"/><rect x="922.00" y="197.20" width="3.8" height="0.40" fill="#bfdfe2"/><rect x="925.90" y="197.20" width="3.8" height="0.40" fill="#bfdfe2"/><rect x="929.80" y="197.20" width="3.8" height="0.40" fill="#bfdfe2"/><rect x="933.70" y="197.20" width="3.8" height="0.40" fill="#bfdfe2"/><rect x="937.60" y="197.20" width="3.8" height="0.40" fill="#bfdfe2"/><rect x="941.50" y="197.20" width="3.8" height="0.40" fill="#bfdfe2"/><rect x="945.40" y="197.20" width="3.8" height="0.40" fill="#bfdfe2"/><rect x="949.30" y="197.20" width="3.8" height="0.40" fill="#bfdfe2"/><rect x="953.20" y="197.20" width="3.8" height="0.40" fill="#bfdfe2"/><rect x="957.10" y="197.20" width="3.8" height="0.40" fill="#bfdfe2"/><rect x="961.00" y="197.20" width="3.8" height="0.40" fill="#bfdfe2"/><rect x="964.90" y="197.20" width="3.8" height="0.40" fill="#bfdfe2"/><rect x="968.80" y="197.20" width="3.8" height="0.40" fill="#bfdfe2"/>
<path d="M827.4 320.2L832.8 387.3M835.4 314.8L839.7 381.9M843.4 309.5L846.6 376.6M851.4 304.1L853.6 371.2M859.4 298.8L860.5 365.9M867.4 293.4L867.4 360.5M832.8 387.3L867.4 360.5M832.0 377.6L867.4 350.8M831.2 367.8L867.4 341.0M830.4 358.1L867.4 331.2M829.7 348.3L867.4 321.5M828.9 338.6L867.4 311.8M828.1 328.8L867.4 302.0M827.4 320.2L867.4 293.4" fill="none" stroke="#cbcbcb" stroke-width="0.7"/>
<path d="M891.3 294.3L891.3 354.9M898.4 295.5L898.4 356.8M905.5 296.8L905.5 358.6M912.6 298.1L912.6 360.4M919.8 299.4L919.8 362.2M926.9 300.7L926.9 364.0M934.0 302.0L934.0 365.8M941.1 303.3L941.1 367.6M948.2 304.6L948.2 369.4M889.0 296.1L950.5 307.4M889.0 305.4L950.5 317.4M889.0 314.8L950.5 327.5M889.0 324.1L950.5 337.5M889.0 333.4L950.5 347.5M889.0 342.8L950.5 357.5M889.0 352.1L950.5 367.6" fill="none" stroke="#cbcbcb" stroke-width="0.7"/>
<path d="M883.3 373.7L846.2 407.3M890.1 375.8L854.2 410.4M896.9 377.9L862.1 413.4M903.7 380.0L870.1 416.5M910.5 382.1L878.0 419.5M917.3 384.2L885.9 422.6M924.1 386.3L893.9 425.6M930.9 388.5L901.8 428.7M937.7 390.6L909.8 431.7M879.7 374.2L938.9 392.8M872.8 380.4L933.8 400.5M865.9 386.6L928.7 408.1M858.9 392.8L923.6 415.8M852.0 399.0L918.4 423.5M845.1 405.1L913.3 431.2" fill="none" stroke="#cbcbcb" stroke-width="0.7"/>
<defs><linearGradient id="sg" x1="0" y1="0" x2="0.25" y2="1"><stop offset="0" stop-color="#66dcb4"/><stop offset="0.55" stop-color="#4aa6a6"/><stop offset="1" stop-color="#3b8a9c"/></linearGradient></defs>
<polygon points="843.4,362.1 853.5,354.9 858,356.5 862.4,354.9 870,346.9 884.2,335.5 899.9,327 907.7,323 916.9,324.2 924,326.3 934,328.4 936.1,330.6 937.5,337.3 946.1,338.7 945.4,340.5 938.2,341.5 934,339.8 921.9,338.4 917.6,341.9 912.7,348.3 904.1,354.7 895.6,360.4 889.9,362.6 880.7,363.6 874.3,361.9 870,362.6 863.6,363.8 856.9,361.6 850.1,362.7" fill="#72f2bc"/>
<polygon points="897,337.3 905.5,339.1 912.7,341.2 917.6,341.9 912.7,348.3 904.1,354.7 895.6,360.4 889.9,362.6 880.7,363.6 874.3,361.9 884.2,349.8 891.3,342.7" fill="url(#sg)"/>
<text x="828.0" y="331.1" font-size="6.2" text-anchor="end" fill="#2a2a2a" stroke="#2a2a2a" stroke-width="0.12">1000.00</text>
<text x="828.4" y="341.6" font-size="6.2" text-anchor="end" fill="#2a2a2a" stroke="#2a2a2a" stroke-width="0.12">900.00</text>
<text x="828.7" y="352.2" font-size="6.2" text-anchor="end" fill="#2a2a2a" stroke="#2a2a2a" stroke-width="0.12">800.00</text>
<text x="829.1" y="362.1" font-size="6.2" text-anchor="end" fill="#2a2a2a" stroke="#2a2a2a" stroke-width="0.12">700.00</text>
<text x="830.9" y="372.1" font-size="6.2" text-anchor="end" fill="#2a2a2a" stroke="#2a2a2a" stroke-width="0.12">600.00</text>
<text x="831.6" y="381.2" font-size="6.2" text-anchor="end" fill="#2a2a2a" stroke="#2a2a2a" stroke-width="0.12">500.00</text>
<text x="832.8" y="389.6" font-size="6.2" text-anchor="end" fill="#2a2a2a" stroke="#2a2a2a" stroke-width="0.12">400.00</text>
<text x="805.2" y="360.4" font-size="6.2" text-anchor="middle" fill="#2a2a2a" stroke="#2a2a2a" stroke-width="0.12">z</text>
<text x="834.0" y="293.2" font-size="6.2" text-anchor="middle" fill="#2a2a2a" stroke="#2a2a2a" stroke-width="0.12">y</text>
<text x="821.8" y="315.1" font-size="6.2" text-anchor="middle" fill="#2a2a2a" stroke="#2a2a2a" stroke-width="0.12">1200.00</text>
<text x="829.8" y="309.9" font-size="6.2" text-anchor="middle" fill="#2a2a2a" stroke="#2a2a2a" stroke-width="0.12">1000.00</text>
<text x="837.7" y="305.9" font-size="6.2" text-anchor="middle" fill="#2a2a2a" stroke="#2a2a2a" stroke-width="0.12">800.00</text>
<text x="845.6" y="301.8" font-size="6.2" text-anchor="middle" fill="#2a2a2a" stroke="#2a2a2a" stroke-width="0.12">600.00</text>
<text x="853.5" y="297.6" font-size="6.2" text-anchor="middle" fill="#2a2a2a" stroke="#2a2a2a" stroke-width="0.12">400.00</text>
<text x="861.7" y="293.9" font-size="6.2" text-anchor="middle" fill="#2a2a2a" stroke="#2a2a2a" stroke-width="0.12">200.00</text>
<text x="845.2" y="416.6" font-size="6.2" text-anchor="middle" fill="#2a2a2a" stroke="#2a2a2a" stroke-width="0.12">600.00</text>
<text x="852.4" y="419.5" font-size="6.2" text-anchor="middle" fill="#2a2a2a" stroke="#2a2a2a" stroke-width="0.12">800.00</text>
<text x="859.7" y="422.3" font-size="6.2" text-anchor="middle" fill="#2a2a2a" stroke="#2a2a2a" stroke-width="0.12">1000.00</text>
<text x="866.9" y="425.2" font-size="6.2" text-anchor="middle" fill="#2a2a2a" stroke="#2a2a2a" stroke-width="0.12">1200.00</text>
<text x="874.2" y="428.0" font-size="6.2" text-anchor="middle" fill="#2a2a2a" stroke="#2a2a2a" stroke-width="0.12">1400.00</text>
<text x="881.4" y="430.9" font-size="6.2" text-anchor="middle" fill="#2a2a2a" stroke="#2a2a2a" stroke-width="0.12">1600.00</text>
<text x="888.6" y="433.8" font-size="6.2" text-anchor="middle" fill="#2a2a2a" stroke="#2a2a2a" stroke-width="0.12">1800.00</text>
<text x="895.9" y="436.6" font-size="6.2" text-anchor="middle" fill="#2a2a2a" stroke="#2a2a2a" stroke-width="0.12">2000.00</text>
<text x="903.1" y="439.4" font-size="6.2" text-anchor="middle" fill="#2a2a2a" stroke="#2a2a2a" stroke-width="0.12">2200.00</text>
<text x="869.6" y="441.8" font-size="6.2" text-anchor="middle" fill="#2a2a2a" stroke="#2a2a2a" stroke-width="0.12">x</text>
</svg>
</div>
</body></html>
